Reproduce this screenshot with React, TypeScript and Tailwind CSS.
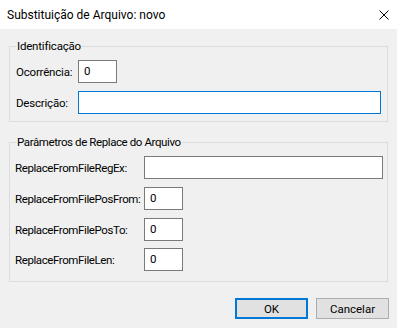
import React from "react";

function Field({ value = "", width, focused = false }: { value?: string; width: string; focused?: boolean }) {
  return (
    <div
      className={`${width} h-[23px] shrink-0 bg-white border ${focused ? "border-[#0078d7]" : "border-[#7a7a7a]"} pl-[5px] pb-[2px] flex items-center leading-[16px] text-[11.5px]`}
    >
      {value}
    </div>
  );
}

export default function App() {
  return (
    <div className="w-[397px] h-[328px] bg-[#f0f0f0] font-['Roboto',sans-serif] text-[11.5px] text-black flex flex-col overflow-hidden">
      <div className="h-[29px] shrink-0 bg-white flex items-center justify-between pl-[7px] pr-[7px]">
        <span className="leading-[16px] text-[12px]">Substituição de Arquivo: novo</span>
        <svg width="10" height="10" viewBox="0 0 10 10" className="mr-[1px]">
          <path d="M0.5 0.5 L9.5 9.5 M9.5 0.5 L0.5 9.5" stroke="#000" strokeWidth="1" fill="none" />
        </svg>
      </div>

      <div className="px-[9px] pt-[17px] flex flex-col">
        <div className="relative border border-[#dcdcdc] h-[76px] pt-[13px] pl-[6px] flex flex-col gap-[8px]">
          <span className="absolute left-[6px] -top-[9px] px-[1px] bg-[#f0f0f0] leading-[16px] tracking-[-0.2px]">Identificação</span>
          <div className="flex items-center">
            <span className="w-[62px] shrink-0 leading-[16px] tracking-[-0.2px]">Ocorrência:</span>
            <Field value="0" width="w-[39px]" />
          </div>
          <div className="flex items-center">
            <span className="w-[62px] shrink-0 leading-[16px] tracking-[-0.2px]">Descrição:</span>
            <Field width="w-[303px]" focused />
          </div>
        </div>

        <div className="relative mt-[20px] border border-[#dcdcdc] h-[140px] pt-[13px] pl-[5px] flex flex-col tracking-[-0.4px]">
          <span className="absolute left-[6px] -top-[9px] px-[1px] bg-[#f0f0f0] leading-[16px]">Parâmetros de Replace do Arquivo</span>
          <div className="flex items-center">
            <span className="w-[129px] shrink-0 leading-[16px]">ReplaceFromFileRegEx:</span>
            <Field width="w-[239px]" />
          </div>
          <div className="flex items-center mt-[8px]">
            <span className="w-[129px] shrink-0 leading-[16px]">ReplaceFromFilePosFrom:</span>
            <Field value="0" width="w-[39px]" />
          </div>
          <div className="flex items-center mt-[8px]">
            <span className="w-[129px] shrink-0 leading-[16px]">ReplaceFromFilePosTo:</span>
            <Field value="0" width="w-[39px]" />
          </div>
          <div className="flex items-center mt-[7px]">
            <span className="w-[129px] shrink-0 leading-[16px]">ReplaceFromFileLen:</span>
            <Field value="0" width="w-[39px]" />
          </div>
        </div>
      </div>

      <div className="mt-[16px] flex justify-end gap-[8px] pr-[8px]">
        <button className="w-[73px] h-[21px] bg-[#e1e1e1] border-2 border-[#0078d7] leading-[16px] flex items-center justify-center">
          OK
        </button>
        <button className="w-[73px] h-[21px] bg-[#e1e1e1] border border-[#adadad] leading-[16px] flex items-center justify-center">
          Cancelar
        </button>
      </div>
    </div>
  );
}
